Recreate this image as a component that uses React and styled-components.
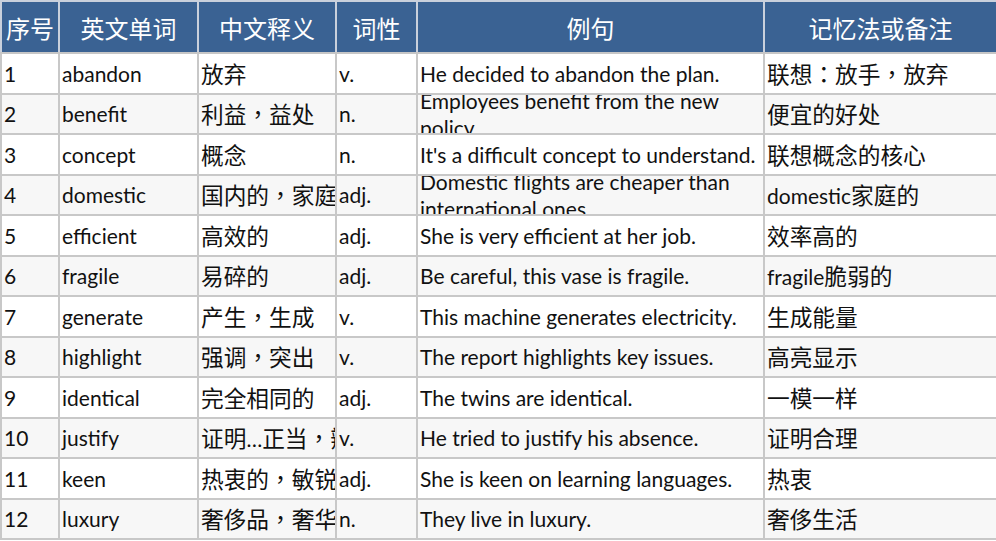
import React from 'react'
import styled, {createGlobalStyle} from 'styled-components'

const GlobalStyle = createGlobalStyle`
  html, body {
    margin: 0;
    padding: 0;
    background: #ffffff;
  }
  body {
    font-family: Lato, 'Noto Sans CJK SC', sans-serif;
  }
`

const Sheet = styled.table`
  width: 996px;
  table-layout: fixed;
  border-collapse: collapse;
  border-spacing: 0;
`

const HeadCell = styled.th`
  padding: 0;
  background: #3a6293;
  color: #ffffff;
  font-weight: normal;
  font-size: 24px;
  border: 2px solid #c9d0dc;
  border-bottom-color: #c6c6c6;
`

const HeadInner = styled.div`
  height: 50px;
  display: flex;
  align-items: center;
  justify-content: center;
  white-space: nowrap;
  overflow: hidden;
`

const Row = styled.tr`
  background: ${props => (props.$alt ? '#f7f7f7' : '#ffffff')};
`

const Cell = styled.td`
  padding: 0;
  border: 2px solid #c8c8c8;
  color: #111111;
  font-size: 21px;
`

const CellInner = styled.div`
  height: 38.5px;
  display: flex;
  align-items: center;
  padding: 0 2px;
  overflow: hidden;
  white-space: ${props => (props.$wrap ? 'normal' : 'nowrap')};
  line-height: ${props => (props.$wrap ? '27px' : 'normal')};
`

const Line = styled.span`
  display: block;
`

// Chinese runs render a bit larger than the Latin text, as in the sheet
const Han = styled.span`
  font-family: 'Noto Sans CJK SC', sans-serif;
  font-size: 22.7px;
`

// full-width punctuation sits in the middle of its box
const Punct = styled(Han)`
  font-family: 'Noto Sans CJK TC', sans-serif;
`

const HAN_RE = /([\u3000-\u303f\u3400-\u9fff\uff00-\uffef]+)/
const PUNCT_RE = /([，：])/

const renderText = text =>
  text.split(HAN_RE).map((part, i) => {
    if (!part) return null
    if (i % 2 === 0) return <React.Fragment key={i}>{part}</React.Fragment>
    return (
      <Han key={i}>
        {part.split(PUNCT_RE).map((bit, j) =>
          j % 2 === 1 ? <Punct key={j}>{bit}</Punct> : bit
        )}
      </Han>
    )
  })

const columns = [
  {title: '序号', width: 58},
  {title: '英文单词', width: 139},
  {title: '中文释义', width: 138},
  {title: '词性', width: 81},
  {title: '例句', width: 347},
  {title: '记忆法或备注', width: 233},
]

const words = [
  ['1', 'abandon', '放弃', 'v.', 'He decided to abandon the plan.', '联想：放手，放弃'],
  ['2', 'benefit', '利益，益处', 'n.', 'Employees benefit from the new policy.', '便宜的好处'],
  ['3', 'concept', '概念', 'n.', "It's a difficult concept to understand.", '联想概念的核心'],
  ['4', 'domestic', '国内的，家庭的', 'adj.', 'Domestic flights are cheaper than international ones.', 'domestic家庭的'],
  ['5', 'efficient', '高效的', 'adj.', 'She is very efficient at her job.', '效率高的'],
  ['6', 'fragile', '易碎的', 'adj.', 'Be careful, this vase is fragile.', 'fragile脆弱的'],
  ['7', 'generate', '产生，生成', 'v.', 'This machine generates electricity.', '生成能量'],
  ['8', 'highlight', '强调，突出', 'v.', 'The report highlights key issues.', '高亮显示'],
  ['9', 'identical', '完全相同的', 'adj.', 'The twins are identical.', '一模一样'],
  ['10', 'justify', '证明…正当，辩护', 'v.', 'He tried to justify his absence.', '证明合理'],
  ['11', 'keen', '热衷的，敏锐的', 'adj.', 'She is keen on learning languages.', '热衷'],
  ['12', 'luxury', '奢侈品，奢华', 'n.', 'They live in luxury.', '奢侈生活'],
]

const App = () => (
  <>
    <GlobalStyle />
    <Sheet>
      <colgroup>
        {columns.map(col => (
          <col key={col.title} style={{width: col.width}} />
        ))}
      </colgroup>
      <thead>
        <tr>
          {columns.map(col => (
            <HeadCell key={col.title}>
              <HeadInner>{col.title}</HeadInner>
            </HeadCell>
          ))}
        </tr>
      </thead>
      <tbody>
        {words.map((row, idx) => (
          <Row key={row[0]} $alt={idx % 2 === 1}>
            {row.map((val, i) => (
              <Cell key={i}>
                <CellInner $wrap={i === 4}>
                  <Line>{renderText(val)}</Line>
                </CellInner>
              </Cell>
            ))}
          </Row>
        ))}
      </tbody>
    </Sheet>
  </>
)

export default App
